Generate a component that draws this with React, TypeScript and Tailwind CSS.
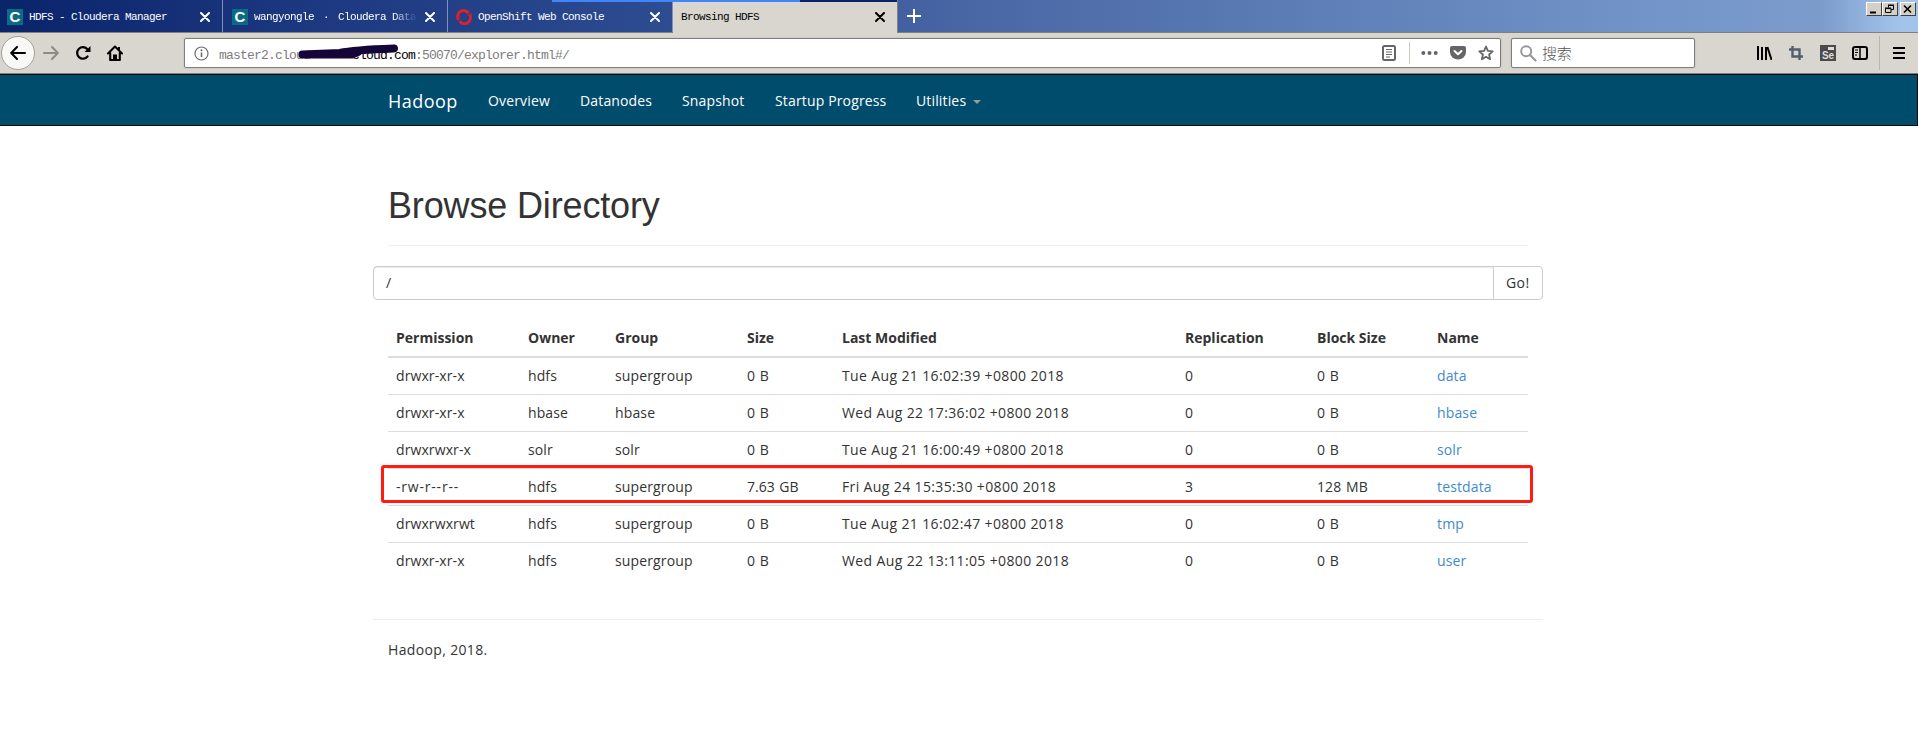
import React from "react";

const ui = "font-['Open_Sans','Noto_Sans',sans-serif]";

const columns = [
  { label: "Permission", width: "w-[132px]", cell: "tracking-[0.1px]" },
  { label: "Owner", width: "w-[87px]", cell: "tracking-[0.1px]" },
  { label: "Group", width: "w-[132px]", cell: "tracking-[0.14px]" },
  { label: "Size", width: "w-[95px]", cell: "[word-spacing:1px]" },
  { label: "Last Modified", width: "w-[343px]", cell: "tracking-[0.37px]" },
  { label: "Replication", width: "w-[132px]", cell: "" },
  { label: "Block Size", width: "w-[120px]", cell: "tracking-[0.1px] [word-spacing:1px]" },
  { label: "Name", width: "w-[99px]", cell: "tracking-[0.14px] text-[#428bca]" },
];

const rows = [
  ["drwxr-xr-x", "hdfs", "supergroup", "0 B", "Tue Aug 21 16:02:39 +0800 2018", "0", "0 B", "data"],
  ["drwxr-xr-x", "hbase", "hbase", "0 B", "Wed Aug 22 17:36:02 +0800 2018", "0", "0 B", "hbase"],
  ["drwxrwxr-x", "solr", "solr", "0 B", "Tue Aug 21 16:00:49 +0800 2018", "0", "0 B", "solr"],
  ["-rw-r--r--", "hdfs", "supergroup", "7.63 GB", "Fri Aug 24 15:35:30 +0800 2018", "3", "128 MB", "testdata"],
  ["drwxrwxrwt", "hdfs", "supergroup", "0 B", "Tue Aug 21 16:02:47 +0800 2018", "0", "0 B", "tmp"],
  ["drwxr-xr-x", "hdfs", "supergroup", "0 B", "Wed Aug 22 13:11:05 +0800 2018", "0", "0 B", "user"],
];

function CloseIcon({ dark = false }: { dark?: boolean }) {
  return (
    <svg width="10" height="10" viewBox="0 0 10 10" className={dark ? "text-black" : "text-white"}>
      <path d="M1 1L9 9M9 1L1 9" stroke="currentColor" strokeWidth="2" strokeLinecap="round" />
    </svg>
  );
}

function ClouderaIcon() {
  return (
    <span className="flex h-4 w-4 shrink-0 items-center justify-center bg-[#0b6b86] font-['Liberation_Sans',sans-serif] text-[15px] leading-4 font-bold text-white">
      C
    </span>
  );
}

function OpenShiftIcon() {
  return (
    <svg width="16" height="16" viewBox="0 0 16 16" className="shrink-0">
      <path d="M2.6 11A6 6 0 0 1 12.6 4.2" fill="none" stroke="#db212e" strokeWidth="3" />
      <path d="M13.6 5.6A6 6 0 0 1 3.6 12.2" fill="none" stroke="#db212e" strokeWidth="3" />
      <path d="M0 9.2L4.6 7.6M11.4 6.6L16 5" stroke="#c22036" strokeWidth="1.4" />
    </svg>
  );
}

function Tab({ icon, title, width, fade = false }: { icon: React.ReactNode; title: React.ReactNode; width: string; fade?: boolean }) {
  return (
    <div className={`flex h-8 shrink-0 items-center border-r border-[#8193bd] pt-0.5 pr-3 ${width}`}>
      {icon}
      <span
        className={`ml-1.5 flex-1 overflow-hidden font-['Liberation_Mono',monospace] text-[11px] leading-4 tracking-[-0.6px] whitespace-pre text-white ${
          fade ? "[mask-image:linear-gradient(to_right,#000_85%,transparent)]" : ""
        }`}
      >
        {title}
      </span>
      <span className="ml-2">
        <CloseIcon />
      </span>
    </div>
  );
}

function TabBar() {
  return (
    <div className="flex h-[33px] border-b border-[#808080] bg-[linear-gradient(to_right,#0a246a_0%,#1c3880_16%,#2e4d92_36%,#4866a4_50%,#5f80b8_70%,#7294c8_86%,#7c9ccc_95%,#a2c4ea_99%)]">
      <Tab icon={<ClouderaIcon />} title="HDFS - Cloudera Manager" width="w-[223px] pl-[7px]" />
      <Tab
        icon={<ClouderaIcon />}
        title={
          <>
            wangyongle <span className="px-[3px]">·</span> Cloudera Data
          </>
        }
        width="w-[225px] pl-[9px]"
        fade
      />
      <Tab icon={<OpenShiftIcon />} title="OpenShift Web Console" width="w-[225px] pl-2" />
      <div className="relative h-[33px] w-[224px] shrink-0 bg-[#d9d6cf]">
        <div className="absolute top-0 right-0 h-0.5 w-[97px] bg-[#0a246a]" />
        <div className="absolute top-0 left-[-121px] h-0.5 w-[248px] bg-[#3f86fb]" />
        <div className="flex h-8 items-center justify-between pt-0.5 pr-3 pl-2">
          <span className="font-['Liberation_Mono',monospace] text-[11px] leading-4 tracking-[-0.6px] text-black">Browsing HDFS</span>
          <CloseIcon dark />
        </div>
      </div>
      <div className="flex h-8 flex-1 items-center border-l border-[#808080] pl-[9px]">
        <svg width="14" height="14" viewBox="0 0 14 14">
          <path d="M7 0V14M0 7H14" stroke="#fff" strokeWidth="2" />
        </svg>
      </div>
      <div className="flex pt-0.5 pr-0.5">
        <WindowButton>
          <path d="M3 9.5H9" stroke="#000" strokeWidth="2" />
        </WindowButton>
        <WindowButton>
          <path d="M5 2.5H10.5V6.5H8M5.5 2V4.5M2.5 5.5H8V9.5H2.5Z" stroke="#000" fill="none" />
          <path d="M5 2H11M2 5H8" stroke="#000" />
        </WindowButton>
        <span className="w-0.5" />
        <WindowButton>
          <path d="M3 2.5L10 9.5M10 2.5L3 9.5" stroke="#000" strokeWidth="1.6" />
        </WindowButton>
      </div>
    </div>
  );
}

function WindowButton({ children }: { children: React.ReactNode }) {
  return (
    <span className="flex h-3.5 w-4 border border-t-white border-r-[#404040] border-b-[#404040] border-l-white bg-[#d4d0c8]">
      <svg width="14" height="12" viewBox="0 0 14 12">
        {children}
      </svg>
    </span>
  );
}

function Toolbar() {
  return (
    <div className="flex h-[41px] items-center border-b border-[#808080] bg-[#d9d6cf]">
      <span className="ml-px flex h-[34px] w-[34px] items-center justify-center rounded-full border border-[#a3a19c] bg-[#f8f8f6]">
        <svg width="16" height="14" viewBox="0 0 16 14">
          <path d="M15 7H1.5M7 1L1.2 7L7 13" fill="none" stroke="#000" strokeWidth="2" strokeLinecap="round" strokeLinejoin="round" />
        </svg>
      </span>
      <svg width="16" height="14" viewBox="0 0 16 14" className="ml-2">
        <path d="M1 7H14.5M9 1L14.8 7L9 13" fill="none" stroke="#8d8b87" strokeWidth="2" strokeLinecap="round" strokeLinejoin="round" />
      </svg>
      <svg width="16" height="16" viewBox="0 0 16 16" className="ml-4">
        <path d="M12.6 11.4A5.8 5.8 0 1 1 12.2 4" fill="none" stroke="#000" strokeWidth="2.2" strokeLinecap="round" />
        <path d="M15.5 1V7H9.5Z" />
      </svg>
      <svg width="16" height="16" viewBox="0 0 16 16" className="ml-4">
        <path d="M1 8.5L8 1.5L15 8.5M3.2 8V15H12.8V8" fill="none" stroke="#000" strokeWidth="2.1" strokeLinecap="round" strokeLinejoin="round" />
        <path d="M6 15V9.5H10V15ZM11 2H13V6H11Z" />
      </svg>
      <div className="ml-[61px] flex h-[30px] w-[1317px] items-center rounded-[2px] border border-[#7d7d7d] bg-white pr-1.5 pl-[9px] shadow-[0_0_2px_#b8b5ae]">
        <svg width="15" height="15" viewBox="0 0 15 15" className="mr-2.5 shrink-0">
          <circle cx="7.5" cy="7.5" r="6.5" fill="none" stroke="#6c6c6c" strokeWidth="1.2" />
          <path d="M7.5 6.5V11" stroke="#6c6c6c" strokeWidth="1.6" />
          <circle cx="7.5" cy="4.3" r="1" fill="#6c6c6c" />
        </svg>
        <span className="relative pt-1.5 font-['Liberation_Mono',monospace] text-[13px] leading-5 tracking-[-0.8px] whitespace-pre text-[#7d7d7d]">
          master2.cloud<span className="text-black">{"      cloud.com"}</span>:50070/explorer.html#/
          <svg width="102" height="16" viewBox="0 0 102 16" className="absolute top-[4px] left-[79px]">
            <path d="M4.500 10.5L42 9Q55 6 96 4.5M4.500 10.5H54L60 8" fill="none" stroke="#150538" strokeWidth="8" strokeLinecap="round" strokeLinejoin="round" />
          </svg>
        </span>
        <span className="flex-1" />
        <svg width="14" height="16" viewBox="0 0 14 16">
          <rect x="1" y="1" width="12" height="14" rx="1.5" fill="none" stroke="#666" strokeWidth="2" />
          <path d="M4 4.5H10M4 7H10M4 9.5H10M4 12H8" stroke="#666" />
        </svg>
        <span className="mr-[11px] ml-[13px] h-[22px] w-px bg-[#cbc8c0]" />
        <svg width="17" height="16" viewBox="0 0 17 16">
          <circle cx="2.3" cy="8" r="2" fill="#666" />
          <circle cx="8.5" cy="8" r="2" fill="#666" />
          <circle cx="14.7" cy="8" r="2" fill="#666" />
        </svg>
        <svg width="16" height="16" viewBox="0 0 16 16" className="ml-3">
          <path d="M2 1H14Q16 1 16 3V7A8 7.5 0 0 1 0 7V3Q0 1 2 1Z" fill="#666" />
          <path d="M4.5 6L8 9.3L11.5 6" fill="none" stroke="#fff" strokeWidth="2" strokeLinecap="round" strokeLinejoin="round" />
        </svg>
        <svg width="16" height="16" viewBox="0 0 16 16" className="ml-3">
          <path d="M8 1.5L9.9 5.8L14.7 6.3L11.1 9.5L12.1 14.2L8 11.8L3.9 14.2L4.9 9.5L1.3 6.3L6.1 5.8Z" fill="none" stroke="#666" strokeWidth="1.8" strokeLinejoin="round" />
        </svg>
      </div>
      <div className="ml-2.5 flex h-[30px] w-[184px] items-center rounded-[2px] border border-[#7d7d7d] bg-white pl-2 shadow-[0_0_2px_#b8b5ae]">
        <svg width="17" height="17" viewBox="0 0 17 17">
          <circle cx="6.2" cy="6.2" r="5" fill="none" stroke="#999" strokeWidth="2" />
          <path d="M10 10L15.5 15.5" stroke="#999" strokeWidth="2.2" strokeLinecap="round" />
        </svg>
        <span className="ml-[5px] font-['Noto_Sans_CJK_SC',sans-serif] text-[15px] leading-5 tracking-[-0.2px] font-light text-[#555]">搜索</span>
      </div>
      <span className="flex-1" />
      <svg width="16" height="16" viewBox="0 0 16 16">
        <path d="M2 1V15M6 2V15M10 2V15" stroke="#000" strokeWidth="2" />
        <path d="M11.4 2L15.6 15" stroke="#000" strokeWidth="2" />
      </svg>
      <svg width="16" height="16" viewBox="0 0 16 16" className="ml-4">
        <path d="M4.5 1V11.5H15M1 4.5H11.5V15" fill="none" stroke="#52606e" strokeWidth="2.4" />
      </svg>
      <span className="relative ml-4 flex h-4 w-4 items-end justify-center bg-[#4b4b4b] font-['Liberation_Sans',sans-serif] text-[10px] leading-[11px] font-bold text-[#ddd]">
        Se
        <span className="absolute top-0.5 right-0.5 h-[3px] w-[6px] bg-[#ddd]" />
      </span>
      <svg width="16" height="16" viewBox="0 0 16 16" className="ml-4">
        <rect x="1" y="2" width="14" height="12" rx="2" fill="none" stroke="#000" strokeWidth="2" />
        <path d="M8 2V14" stroke="#000" strokeWidth="1.5" />
        <path d="M3 5H6M3 7.5H6M3 10H5" stroke="#000" />
      </svg>
      <span className="ml-[11px] h-[34px] w-px bg-[#b9b6af]" />
      <svg width="12" height="12" viewBox="0 0 12 12" className="mr-[13px] ml-[13px]">
        <path d="M0 1H12M0 6H12M0 11H12" stroke="#000" strokeWidth="2" />
      </svg>
    </div>
  );
}

function NavBar() {
  return (
    <nav className={`flex h-[52px] items-center border-y border-r border-[#080808] bg-[#004c6c] pt-0.5 pl-[388px] text-[14px] leading-5 text-white ${ui}`}>
      <span className="w-[100px] text-[18px] tracking-[0.45px]">Hadoop</span>
      <span className="w-[92px] tracking-[0.15px]">Overview</span>
      <span className="w-[102px] tracking-[0.15px]">Datanodes</span>
      <span className="w-[93px] tracking-[0.15px]">Snapshot</span>
      <span className="w-[141px] tracking-[0.15px]">Startup Progress</span>
      <span className="flex items-center tracking-[0.15px]">
        Utilities
        <svg width="8" height="4" viewBox="0 0 8 4" className="mt-px ml-[7px]">
          <path d="M0 0H8L4 4Z" fill="#999" />
        </svg>
      </span>
    </nav>
  );
}

function DirectoryTable() {
  return (
    <div className="relative mx-[15px] mt-5">
      <div className="flex border-b-2 border-[#ddd] font-bold">
        {columns.map((c) => (
          <div key={c.label} className={`p-2 ${c.width}`}>
            {c.label}
          </div>
        ))}
      </div>
      {rows.map((row, i) => (
        <div key={row[7]} className={i > 0 ? "flex border-t border-[#ddd]" : "flex"}>
          {row.map((cell, j) => (
            <div
              key={j}
              className={`p-2 whitespace-nowrap ${columns[j].width} ${cell.startsWith("-") ? "tracking-[0.8px]" : columns[j].cell}`}
            >
              {cell}
            </div>
          ))}
        </div>
      ))}
      <div className="absolute top-[145px] left-[-7px] h-[38px] w-[1152px] rounded-[3px] border-[3px] border-[#ff1c10]" />
    </div>
  );
}

export default function App() {
  return (
    <div className="h-[755px] w-[1918px] overflow-hidden bg-white">
      <TabBar />
      <Toolbar />
      <NavBar />
      <main className={`ml-[373px] w-[1170px] text-[14px] leading-5 text-[#333] ${ui}`}>
        <div className="mx-[15px] border-b border-[#eee] pt-[60px] pb-5">
          <h1 className="font-['Liberation_Sans',Arial,sans-serif] text-[36px] leading-[39px] tracking-[-0.15px]">Browse Directory</h1>
        </div>
        <div className="mt-5 flex h-[34px] rounded-[4px] border border-[#ccc]">
          <div className="flex-1 px-3 py-1.5 shadow-[inset_0_1px_1px_rgba(0,0,0,0.075)]">/</div>
          <div className="w-[49px] border-l border-[#ccc] px-3 py-1.5 tracking-[0.4px]">Go!</div>
        </div>
        <DirectoryTable />
        <footer className="mt-10 border-t border-[#eee] px-[15px] pt-5 tracking-[0.35px]">Hadoop, 2018.</footer>
      </main>
    </div>
  );
}
